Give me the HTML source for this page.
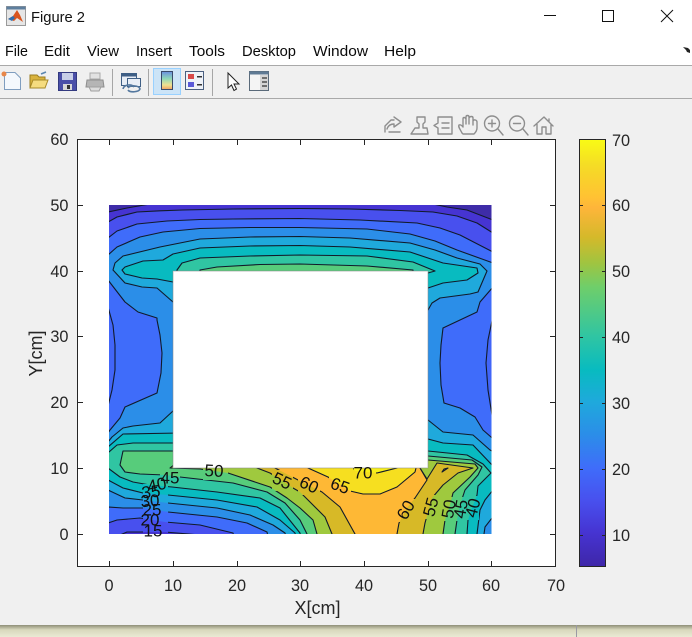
<!DOCTYPE html>
<html><head><meta charset="utf-8"><style>
html,body{margin:0;padding:0;background:#f0f0f0}
svg{display:block;font-family:"Liberation Sans",sans-serif}
.t{font-size:16.3px;fill:#262626}
.m{font-size:14.5px;fill:#0a0a0a}
.l{font-size:17px;fill:#111;text-anchor:middle;dominant-baseline:central}
.g{fill:none;stroke:#8e8e8e;stroke-width:1.4;stroke-linecap:round;stroke-linejoin:round}
</style></head><body>
<svg width="692" height="637" viewBox="0 0 692 637" xmlns="http://www.w3.org/2000/svg">
<defs>
<linearGradient id="cb" x1="0" y1="0" x2="0" y2="1">
<stop offset="0" stop-color="#f9fb15"/><stop offset=".06" stop-color="#f5dc25"/><stop offset=".135" stop-color="#ffc233"/><stop offset=".16" stop-color="#feb53a"/><stop offset=".23" stop-color="#d4b92a"/><stop offset=".289" stop-color="#a0c440"/><stop offset=".345" stop-color="#6fce6a"/><stop offset=".46" stop-color="#30c5a2"/><stop offset=".54" stop-color="#08bbc0"/><stop offset=".615" stop-color="#1fa9dc"/><stop offset=".69" stop-color="#2b8ee8"/><stop offset=".77" stop-color="#3f6cfa"/><stop offset=".846" stop-color="#4850ee"/><stop offset=".92" stop-color="#4634d2"/><stop offset="1" stop-color="#3e26a8"/>
</linearGradient>
<linearGradient id="sh" x1="0" y1="0" x2="0" y2="1"><stop offset="0" stop-color="#8f8f78"/><stop offset=".4" stop-color="#d8d8bc"/><stop offset="1" stop-color="#eaead4"/></linearGradient>
<clipPath id="dom"><rect x="109" y="205" width="382.500" height="329"/></clipPath>
<mask id="gaps" maskUnits="userSpaceOnUse" x="0" y="0" width="692" height="637">
<rect width="692" height="637" fill="#fff"/>
<g fill="#000">
<rect x="143" y="484" width="25" height="52"/><rect x="160" y="469" width="20" height="16"/>
<rect x="203" y="462" width="25" height="18"/>
<rect x="272" y="470" width="21" height="21"/><rect x="298" y="475" width="22" height="20"/>
<rect x="329" y="476" width="22" height="20"/><rect x="354" y="464" width="22" height="18"/>
<rect x="398" y="499" width="17" height="23"/><rect x="425" y="495" width="13" height="24"/>
<rect x="444" y="497" width="11" height="24"/><rect x="456" y="497" width="10" height="24"/>
<rect x="467" y="496" width="12" height="24"/>
</g></mask>
<path id="c10" d="M100 212L108 212 127 208 150 204 150 198 433 198 433 204 447 207 467 210 493 220 500 222 500 545 100 545Z"/>
<path id="c15" d="M100 222L108 222 117 217 137 212 160 210.800 183 210 233 209 300 208.500 350 209 400 210.500 433 212 457 216 477 223 493 233 500 238 500 545 200 545 200 535 165 532 143 532 127 532 120 535 120 545 100 545Z"/>
<path id="c20" d="M100 238L108 238 117 231 137 224 167 221 200 219.500 233 219 300 218.500 360 220 417 223 440 228 460 235 493 252 500 256 500 545 236 545 233 533 200 525 165 522 140 518 117 520 108 523 100 525Z"/>
<path id="sl" d="M100 303L108 307 113 325 115 345 115 370 112 390 108 406 100 410ZM500 312L493 316 488 340 486 363 488 390 492 415 500 420Z"/>
<path id="c25" d="M100 255L108 255 117 247 140 237 163 232 200 228.500 250 227.500 300 227.500 367 229 410 234 435 241 457 250 493 263 500 266 500 283 493 287 480 302 477 312 460 320 443 328 441 345 440 363 441 385 444 403 460 408 475 417 483 430 491 437 500 445 500 545 270 545 267 532 247 523 217 517 168 512 143 508 123 508 108 507 100 507 100 435 108 433 110 430 120 418 125 407 157 393 161 373 162 353 160 335 157 320 157 318 138 312 125 302 108 280 100 272Z"/>
<path id="c30" d="M173 302L157 288 142 287 125 283 113 270 115 263 123 256 160 247 200 239 250 237 300 236.500 350 238 410 243 435 250 457 258 480 264 487 271 478 292 470 294 440 298 432 303 428 310 400 310ZM180 405L173 411 160 423 133 426 123 428 112 437 108 442 100 445 100 492 108 490 125 498 143 500 168 503 217 508 250 515 273 525 285 533 288 545 484 545 484 534 485 527 492 518 500 512 500 455 490 450 473 435 443 432 428 420 420 415Z"/>
<path id="c35" d="M122 270L125 267 143 261 163 260 173 254 200 248 250 246 300 245.500 350 247 410 252 443 263 477 268 478 273 467 280 443 283 428 288 420 290 180 285 173 282 157 279 142 278 125 274ZM180 433L123 434 108 447 100 450 100 482 108 480 123 488 143 493 168 495 217 500 257 507 280 520 295 533 297 545 477 545 477 534 480 510 485 500 493 490 500 485 500 470 492 465 473 445 443 443 428 439 420 438Z"/>
<path id="c40" d="M177 275L177 270 182 263 200 258 250 256 300 255 367 256 413 262 435 271 428 273 420 275ZM180 443L133 443 117 445 109 452 100 452 100 468 108 468 120 477 133 482 150 485 172 487 217 492 260 498 280 508 300 533 302 545 467 545 467 534 468 520 472 508 477 495 478 486 491 473 483 464 467 455 428 451 420 451Z"/>
<path id="c45" d="M200 275L200 270 217 267 260 264.500 300 264 367 266 413 270 413 275ZM180 451L123 451 120 465 125 472 140 474 165 475 180 477 233 483 267 492 285 503 300 520 307 534 307 545 455 545 455 534 457 520 460 505 465 490 478 475 482 467 472 460 428 456 420 456Z"/>
<path id="c50" d="M180 460L170 468 200 469 228 473 270 487 287 498 300 508 313 520 317 534 317 545 443 545 443 534 445 520 450 505 453 493 470 477 478 468 475 464 428 460 420 460Z"/>
<path id="c55" d="M250 460L257 468 270 473 293 488 300 492 325 517 332 534 332 545 423 545 423 534 425 523 432 498 443 485 458 473 473 468 437 463 427 479 420 468 420 460Z"/>
<path id="c60" d="M270 460L275 468 300 481 322 492 340 507 355 534 355 545 397 545 397 534 399 523 407 508 415 498 427 480 420 468 420 460ZM442 472L448 468 444 469Z"/>
<path id="c65" d="M300 460L308 468 328 477 350 491 363 494 380 494 397 487 415 472 416 468 416 460Z"/>
<path id="c70" d="M350 460L355 471 377 473 397 468 397 460Z"/>
<linearGradient id="ci" x1="0" y1="0" x2="0" y2="1"><stop offset="0" stop-color="#6a8fe0"/><stop offset=".4" stop-color="#8fd8b8"/><stop offset=".75" stop-color="#f0e090"/><stop offset="1" stop-color="#f0a060"/></linearGradient>
</defs>

<rect width="692" height="637" fill="#f0f0f0"/>
<!-- window chrome -->
<rect width="692" height="65" fill="#fff"/>
<rect y="65" width="692" height="1" fill="#a9a9a9"/>
<rect y="98" width="692" height="1" fill="#a9a9a9"/>
<rect y="625" width="692" height="12" fill="url(#sh)"/>
<rect x="576" y="625" width="1" height="12" fill="#9a9aa4"/>

<!-- title logo -->
<rect x="6.500" y="6.500" width="19" height="19" fill="#e6e6e6" stroke="#9a9a9a"/>
<rect x="6.500" y="6.500" width="19" height="3" fill="#5e7f9e"/>
<path d="M8 19L13 16 17 10 20 15 23 22 20 20 17 18 14 21 8 19Z" fill="#d9541e"/>
<path d="M8 19L13 16 15 18 12 21Z" fill="#2d6fb0"/>
<text x="31" y="22" font-size="14.500" fill="#111" textLength="54" lengthAdjust="spacingAndGlyphs">Figure 2</text>

<!-- window controls -->
<rect x="544" y="15" width="12" height="1" fill="#111"/>
<rect x="602.500" y="10.500" width="11" height="11" fill="none" stroke="#111"/>
<path d="M661 10L673 22M673 10L661 22" stroke="#111" fill="none"/>

<!-- menu -->
<text x="5" y="56" textLength="23" lengthAdjust="spacingAndGlyphs" class="m">File</text>
<text x="44" y="56" textLength="26" lengthAdjust="spacingAndGlyphs" class="m">Edit</text>
<text x="87" y="56" textLength="32" lengthAdjust="spacingAndGlyphs" class="m">View</text>
<text x="136" y="56" textLength="36" lengthAdjust="spacingAndGlyphs" class="m">Insert</text>
<text x="189" y="56" textLength="36" lengthAdjust="spacingAndGlyphs" class="m">Tools</text>
<text x="242" y="56" textLength="54" lengthAdjust="spacingAndGlyphs" class="m">Desktop</text>
<text x="313" y="56" textLength="55" lengthAdjust="spacingAndGlyphs" class="m">Window</text>
<text x="384" y="56" textLength="32" lengthAdjust="spacingAndGlyphs" class="m">Help</text>
<path d="M683 47L688 48 690 50 690 53 687 52 686 50Z" fill="#222"/>

<!-- toolbar -->
<path d="M4.500 72.500H15L20.500 78V89.500H4.500Z" fill="#f4f8fd" stroke="#7f9dbf"/>
<circle cx="4" cy="74" r="2.500" fill="#e8874a"/>
<path d="M30 75H37L39 77H45V88H30Z" fill="#d9b23c" stroke="#9a7d20"/>
<path d="M30 88L33 80H48L45 88Z" fill="#f5dc80" stroke="#a88a28"/>
<path d="M41 74L46 72" stroke="#5a86b0" stroke-width="1.500" fill="none"/>
<rect x="58.500" y="72.500" width="18" height="18" fill="#4a4fa8" stroke="#333a80"/>
<rect x="62" y="73" width="11" height="7" fill="#c8cfe8"/>
<rect x="63" y="84" width="9" height="6" fill="#d8d8d8"/><rect x="67" y="85" width="3" height="4" fill="#333"/>
<path d="M90 73H100V79H90Z" fill="#e2e2e2" stroke="#aaa"/>
<path d="M87 80H103L104 87H86Z" fill="#b5b5b5" stroke="#8e8e8e"/>
<path d="M89 87H101L99 91H91Z" fill="#dcdcdc" stroke="#a0a0a0"/>
<rect x="112" y="69" width="1" height="27" fill="#a6a6a6"/>
<rect x="121.500" y="73.500" width="15" height="12" fill="#e8eef6" stroke="#3f5f85"/>
<rect x="121.500" y="73.500" width="15" height="3" fill="#3f5f85"/>
<rect x="127.500" y="78.500" width="13" height="8" fill="#e8eef6" stroke="#3f5f85"/>
<path d="M123 89C124 84 132 84 134 87M128 88C130 85 139 85 140 89C139 92 130 93 128 90" fill="none" stroke="#54789f" stroke-width="1.600"/>
<rect x="148" y="69" width="1" height="27" fill="#a6a6a6"/>
<rect x="153.500" y="68.500" width="27" height="26" fill="#cce4f7" stroke="#99d1ff"/>
<rect x="161.500" y="71.500" width="11" height="18" fill="url(#ci)" stroke="#3a4a6a"/>
<rect x="185.500" y="71.500" width="18" height="18" fill="#eef2f8" stroke="#4a5f80"/>
<rect x="188" y="74" width="6" height="5" fill="#d84a4a"/><rect x="188" y="82" width="6" height="5" fill="#5a5ad8"/>
<rect x="197" y="76" width="5" height="1.500" fill="#333"/><rect x="197" y="84" width="5" height="1.500" fill="#333"/>
<rect x="212" y="69" width="1" height="27" fill="#a6a6a6"/>
<path d="M228 73V88L231.500 85 234 90.500 236.500 89 234 84H239Z" fill="#fff" stroke="#222"/>
<rect x="249.500" y="71.500" width="19" height="19" fill="#f4f4f4" stroke="#5a6a7a"/>
<rect x="249.500" y="71.500" width="19" height="3" fill="#5f7a94"/>
<rect x="260" y="75" width="8" height="15" fill="#d5d5d5"/>
<path d="M262 78H267M262 82H267M262 86H267" stroke="#333" stroke-width="1.300"/>

<!-- axes -->
<rect x="77.500" y="139.500" width="478" height="427" fill="#fff"/>
<g clip-path="url(#dom)">
<rect x="100" y="198" width="400" height="347" fill="#3e2ca8"/>
<use href="#c10" fill="#4634d2"/><use href="#c15" fill="#4850ee"/><use href="#c20" fill="#3f6cfa"/><use href="#sl" fill="#4165f8"/>
<use href="#c25" fill="#2b8ee8"/><use href="#c30" fill="#1fa9dc"/><use href="#c35" fill="#08bbc0"/><use href="#c40" fill="#30c5a2"/>
<use href="#c45" fill="#57cc7b"/><use href="#c50" fill="#9fc93e"/><use href="#c55" fill="#d7b927"/><use href="#c60" fill="#feb835"/>
<use href="#c65" fill="#f6df20"/><use href="#c70" fill="#f8f01a"/>
<g mask="url(#gaps)" fill="none" stroke="#111a2a" stroke-width="1.100" stroke-linejoin="round">
<use href="#c10"/><use href="#c15"/><use href="#c20"/><use href="#sl"/><use href="#c25"/><use href="#c30"/><use href="#c35"/><use href="#c40"/><use href="#c45"/><use href="#c50"/><use href="#c55"/><use href="#c60"/><use href="#c65"/><use href="#c70"/>
</g>
</g>
<rect x="173" y="271" width="255" height="197" fill="#fff"/>
<path d="M173 271V468H428V271Z" fill="none" stroke="#888" stroke-opacity=".55"/>

<!-- contour labels -->
<text class="l" x="170" y="478">45</text>
<text class="l" x="157" y="485" transform="rotate(-12 157 485)">40</text>
<text class="l" x="151" y="492" transform="rotate(-6 151 492)">35</text>
<text class="l" x="150" y="501" transform="rotate(-4 150 501)">30</text>
<text class="l" x="152" y="510">25</text>
<text class="l" x="150" y="520">20</text>
<text class="l" x="153" y="531">15</text>
<text class="l" x="214" y="471" transform="rotate(3 214 471)">50</text>
<text class="l" x="282" y="481" transform="rotate(25 282 481)">55</text>
<text class="l" x="309" y="485" transform="rotate(25 309 485)">60</text>
<text class="l" x="340" y="486" transform="rotate(20 340 486)">65</text>
<text class="l" x="363" y="473">70</text>
<text class="l" x="406" y="510" transform="rotate(-60 406 510)">60</text>
<text class="l" x="431" y="507" transform="rotate(-75 431 507)">55</text>
<text class="l" x="449" y="509" transform="rotate(-80 449 509)">50</text>
<text class="l" x="461" y="509" transform="rotate(-80 461 509)">45</text>
<text class="l" x="473" y="508" transform="rotate(-75 473 508)">40</text>

<!-- box and ticks -->
<rect x="77.500" y="139.500" width="478" height="427" fill="none" stroke="#262626"/>
<path stroke="#262626" fill="none" d="M109.500 566V561M173.500 566V561M237.500 566V561M300.500 566V561M364.500 566V561M428.500 566V561M491.500 566V561M109.500 140V145M173.500 140V145M237.500 140V145M300.500 140V145M364.500 140V145M428.500 140V145M491.500 140V145M78 534.500H83M78 468.500H83M78 402.500H83M78 336.500H83M78 271.500H83M78 205.500H83M555 534.500H550M555 468.500H550M555 402.500H550M555 336.500H550M555 271.500H550M555 205.500H550"/>
<g class="t" text-anchor="end">
<text x="68.500" y="145">60</text><text x="68.500" y="211">50</text><text x="68.500" y="277">40</text><text x="68.500" y="342">30</text><text x="68.500" y="408">20</text><text x="68.500" y="474">10</text><text x="68.500" y="540">0</text>
</g>
<g class="t" text-anchor="middle">
<text x="109" y="591">0</text><text x="173" y="591">10</text><text x="237" y="591">20</text><text x="300" y="591">30</text><text x="364" y="591">40</text><text x="428" y="591">50</text><text x="491" y="591">60</text><text x="556" y="591">70</text>
</g>
<text x="317.500" y="614" font-size="18" fill="#262626" text-anchor="middle">X[cm]</text>
<text transform="translate(42 353.500) rotate(-90)" font-size="18" fill="#262626" text-anchor="middle">Y[cm]</text>

<!-- colorbar -->
<rect x="579.500" y="139.500" width="26" height="427" fill="url(#cb)" stroke="#262626"/>
<path stroke="#262626" fill="none" d="M580 535.500H583M605 535.500H602M580 469.500H583M605 469.500H602M580 403.500H583M605 403.500H602M580 337.500H583M605 337.500H602M580 271.500H583M605 271.500H602M580 205.500H583M605 205.500H602"/>
<g class="t">
<text x="612" y="146">70</text><text x="612" y="211">60</text><text x="612" y="277">50</text><text x="612" y="343">40</text><text x="612" y="409">30</text><text x="612" y="475">20</text><text x="612" y="541">10</text>
</g>

<!-- axes toolbar -->
<g class="g">
<path d="M385 132V126L391 120H394M389 132H400M394 117L401 122 394 127V124C390 124 388 126 387 129"/>
<path d="M417 117H425V122L423 124V128H427L428 134H411L415 128H419V124L417 122Z"/>
<path d="M438 117H452V134H438V128L434 125.500 438 123ZM442 123H449M442 128H449"/>
<path d="M462 133C460 129 458 127 459 125 461 124 463 127 463 127V119C463 117 465 117 466 119V124 117C466 115 469 115 469 117V124 118C470 116 473 116 473 118V125 121C474 119 477 120 477 122V128C477 131 475 133 474 134H463Z"/>
<circle cx="492" cy="123.500" r="7.500"/><path d="M498 129L503 135M488.500 123.500H495.500M492 120V127"/>
<circle cx="517" cy="123.500" r="7.500"/><path d="M523 129L528 135M513.500 123.500H520.500"/>
<path d="M534 126L544 117 553 126M537 124V134H542V127H546V134H551V124M549 119V122"/>
</g>
</svg>
</body></html>
